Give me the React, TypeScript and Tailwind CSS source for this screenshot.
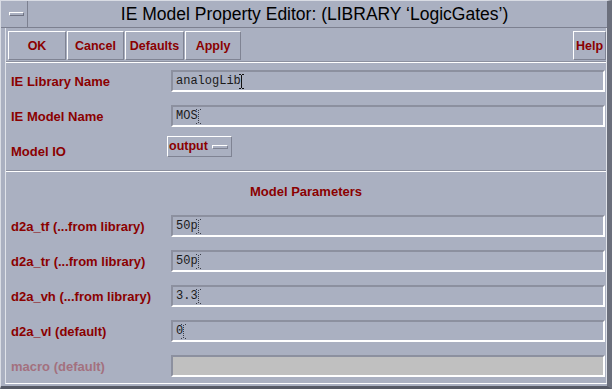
import React from "react";

const SANS = { fontFamily: '"Liberation Sans", Arial, Helvetica, sans-serif' };
const MONO = { fontFamily: '"Liberation Mono", "Courier New", monospace' };

function Cursor({ dotted }: { dotted?: boolean }) {
  const c = dotted ? "#3a3d48" : "#111111";
  return (
    <svg width="6" height="15" viewBox="0 0 6 15">
      {dotted ? (
        <g fill={c}>
          <rect x="0" y="0" width="1" height="1" />
          <rect x="2" y="1" width="1" height="1" />
          <rect x="4" y="0" width="1" height="1" />
          {[2, 4, 6, 8, 10, 12].map((y) => (
            <rect key={y} x="2" y={y + 1} width="1" height="1" />
          ))}
          <rect x="0" y="14" width="1" height="1" />
          <rect x="4" y="14" width="1" height="1" />
        </g>
      ) : (
        <g fill={c}>
          <rect x="0" y="0" width="2" height="1" />
          <rect x="3" y="0" width="2" height="1" />
          <rect x="2" y="1" width="1" height="13" />
          <rect x="0" y="14" width="2" height="1" />
          <rect x="3" y="14" width="2" height="1" />
        </g>
      )}
    </svg>
  );
}

function Field({
  value,
  dotted,
  disabled,
}: {
  value?: string;
  dotted?: boolean;
  disabled?: boolean;
}) {
  return (
    <div
      className={`h-[22px] flex-1 mr-[1px] border-t-2 border-l-2 border-b-2 border-r-2 border-t-[#8c909f] border-l-[#8c909f] border-b-white border-r-white flex items-center pl-[3px] ${
        disabled ? "bg-[#c0c0c0]" : ""
      }`}
    >
      {value !== undefined && (
        <div className="flex items-center text-[12px] text-[#1a1a1a]" style={MONO}>
          <span className="leading-[14px]">{value}</span>
          <span className="-ml-[2px]">
            <Cursor dotted={dotted} />
          </span>
        </div>
      )}
    </div>
  );
}

function Row({
  label,
  value,
  dotted,
  disabled,
}: {
  label: string;
  value?: string;
  dotted?: boolean;
  disabled?: boolean;
}) {
  return (
    <div className="flex items-center h-[22px]">
      <div
        className={`w-[165px] pl-[5px] pt-[2px] text-[13px] font-bold whitespace-nowrap ${
          disabled ? "text-[#a3707e]" : "text-[#8b0000]"
        }`}
        style={SANS}
      >
        {label}
      </div>
      <Field value={value} dotted={dotted} disabled={disabled} />
    </div>
  );
}

function Btn({ label, w }: { label: string; w: string }) {
  return (
    <div
      className={`${w} h-[29px] border border-t-white border-l-white border-b-[#7f8393] border-r-[#7f8393] flex items-center justify-center text-[12.5px] font-bold text-[#8b0000] pt-[1px]`}
      style={SANS}
    >
      {label}
    </div>
  );
}

export default function App() {
  return (
    <div
      className="w-[612px] h-[389px] bg-[#aab0c1] flex flex-col border-t border-l border-t-[#d9dce4] border-l-[#d9dce4] border-r-[5px] border-r-[#6b6f7c] border-b-[3px] border-b-[#565a66] overflow-hidden"
      style={SANS}
    >
      {/* title bar */}
      <div className="h-[27px] flex border-b border-b-[#7c8090] shrink-0">
        <div className="w-[27px] border-r border-r-[#7c8090] flex items-center justify-center pl-[4px]">
          <div className="w-[15px] h-[4px] border-t border-l border-t-white border-l-white border-b border-r border-b-[#6f7383] border-r-[#6f7383]" />
        </div>
        <div className="flex-1 flex items-center justify-center text-[17.5px] text-black pr-[6px] whitespace-nowrap">
          IE Model Property Editor: (LIBRARY ‘LogicGates’)
        </div>
      </div>

      {/* body */}
      <div className="flex-1 flex flex-col ml-[4px] mb-[2px] border-l border-r border-b border-l-[#dfe2e9] border-r-[#dfe2e9] border-b-white">
        {/* buttons */}
        <div className="flex items-start pt-[3px] pl-[2px] h-[33px] shrink-0">
          <div className="flex gap-[1px]">
            <Btn label="OK" w="w-[58px]" />
            <Btn label="Cancel" w="w-[57px]" />
            <Btn label="Defaults" w="w-[59px]" />
            <Btn label="Apply" w="w-[56px]" />
          </div>
          <div className="flex-1" />
          <Btn label="Help" w="w-[33px]" />
        </div>
        <div className="h-[2px] border-t border-t-[#8c909f] border-b border-b-white shrink-0" />

        {/* top form */}
        <div className="flex flex-col pt-[7px] gap-[13px]">
          <Row label="IE Library Name" value="analogLib" />
          <Row label="IE Model Name" value="MOS" dotted />
          <div className="flex items-start h-[22px]">
            <div
              className="w-[161px] pl-[5px] pt-[2px] text-[13px] font-bold text-[#8b0000]"
              style={SANS}
            >
              Model IO
            </div>
            <div className="-mt-[4px] w-[65px] h-[21px] border border-t-white border-l-white border-b-[#7f8393] border-r-[#7f8393] flex items-center pl-[1px]">
              <span className="text-[12.5px] font-bold text-[#8b0000]" style={SANS}>
                output
              </span>
              <div className="ml-[4px] w-[16px] h-[4px] border-t border-l border-t-white border-l-white border-b border-r border-b-[#7f8393] border-r-[#7f8393]" />
            </div>
          </div>
        </div>

        <div className="mt-[8px] h-[2px] border-t border-t-[#8c909f] border-b border-b-white shrink-0" />

        <div
          className="pt-[12px] pb-[16px] text-center text-[13px] font-bold text-[#8b0000] leading-[15px]"
          style={SANS}
        >
          Model Parameters
        </div>

        <div className="flex flex-col gap-[13px]">
          <Row label="d2a_tf (...from library)" value="50p" dotted />
          <Row label="d2a_tr (...from library)" value="50p" dotted />
          <Row label="d2a_vh (...from library)" value="3.3" dotted />
          <Row label="d2a_vl (default)" value="0" dotted />
          <Row label="macro (default)" disabled />
        </div>
      </div>
    </div>
  );
}
